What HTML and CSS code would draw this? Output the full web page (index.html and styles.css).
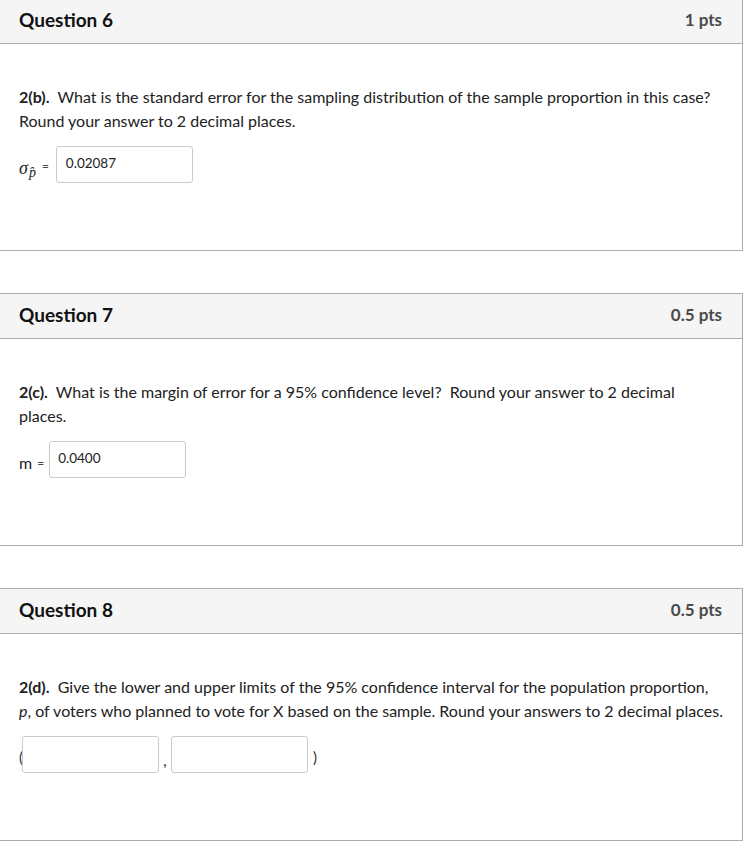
FILE: index.html
```html
<!DOCTYPE html>
<html>
<head>
<meta charset="utf-8">
<link rel="stylesheet" href="styles.css">
</head>
<body>
<div class="page">
  <div class="card first">
    <div class="card-header">
      <span class="q-title">Question 6</span>
      <span class="q-pts">1 pts</span>
    </div>
    <div class="card-body">
      <p class="q-text"><b>2(b).</b>&nbsp; What is the standard error for the sampling distribution of the sample proportion in this case? Round your answer to 2 decimal places.</p>
      <div class="answer-row">
        <span class="math"><i class="sigma">σ</i><sub class="phat"><i>p̂</i></sub></span>
        <span class="eq">=</span>
        <span class="inp">0.02087</span>
      </div>
    </div>
  </div>

  <div class="card">
    <div class="card-header">
      <span class="q-title">Question 7</span>
      <span class="q-pts">0.5 pts</span>
    </div>
    <div class="card-body">
      <p class="q-text"><b>2(c).</b>&nbsp; What is the margin of error for a 95% confidence level?&nbsp; Round your answer to 2 decimal places.</p>
      <div class="answer-row">
        <span class="mlabel">m</span>
        <span class="eq eq-m">=</span>
        <span class="inp inp-m">0.0400</span>
      </div>
    </div>
  </div>

  <div class="card">
    <div class="card-header">
      <span class="q-title">Question 8</span>
      <span class="q-pts">0.5 pts</span>
    </div>
    <div class="card-body">
      <p class="q-text"><b>2(d).</b>&nbsp; Give the lower and upper limits of the 95% confidence interval for the population proportion, <i>p</i>, of voters who planned to vote for X based on the sample. Round your answers to 2 decimal places.</p>
      <div class="answer-row interval">
        <span class="paren">(</span>
        <span class="inp inp-i"></span>
        <span class="comma">,</span>
        <span class="inp inp-i"></span>
        <span class="paren rp">)</span>
      </div>
    </div>
  </div>
</div>
</body>
</html>
```

FILE: styles.css
```css
html, body {
  margin: 0;
  padding: 0;
  background: #ffffff;
}

body {
  font-family: Lato, "Noto Sans", sans-serif;
  color: #222;
}

.page {
  margin-left: -1px;
  width: 744px;
}

.card {
  border: 1px solid #acacac;
  margin-top: 42px;
  box-sizing: border-box;
}

.card.first {
  margin-top: -2px;
}

.card-header {
  background: #f5f5f5;
  border-bottom: 1px solid #acacac;
  height: 45px;
  box-sizing: border-box;
  display: flex;
  align-items: center;
  justify-content: space-between;
  padding: 0 20px 4px 19px;
}

.q-title {
  font-size: 19px;
  font-weight: 700;
  color: #111;
}

.q-pts {
  font-size: 17px;
  font-weight: 700;
  color: #4a4a4a;
}

.card-body {
  height: 206px;
  box-sizing: border-box;
  padding: 41px 19px 0 19px;
}

.q-text {
  margin: 0;
  font-size: 16px;
  line-height: 24px;
  color: #222;
}

.q-text b {
  font-weight: 700;
}

.answer-row {
  display: flex;
  align-items: center;
  margin-top: 13px;
  height: 37px;
}

.math {
  font-family: "Liberation Serif", "DejaVu Serif", serif;
  font-size: 18px;
  display: inline-flex;
  align-items: baseline;
  margin-top: 8px;
}

.sigma {
  font-style: italic;
}

.phat {
  font-size: 14px;
  margin-left: 1px;
  position: relative;
  top: 3px;
  vertical-align: baseline;
}

.eq {
  font-size: 12px;
  color: #444;
  margin-left: 6px;
  margin-right: 7px;
  margin-top: 2px;
}

.mlabel {
  font-size: 16px;
  color: #222;
  margin-top: 6px;
}

.eq-m {
  font-size: 12px;
  margin-left: 5px;
  margin-right: 5px;
  margin-top: 6px;
}

.inp {
  display: inline-block;
  box-sizing: border-box;
  width: 137px;
  height: 37px;
  border: 1px solid #cbcbcb;
  border-radius: 3px;
  background: #fff;
  font-size: 13.5px;
  color: #222;
  padding: 8px 0 0 9px;
}

.inp-m {
  padding-left: 8px;
}

.paren {
  font-size: 15px;
  color: #333;
  width: 4px;
  margin-top: 4px;
}

.interval .paren:first-child {
  width: 3px;
}

.rp {
  margin-left: 5px;
}

.comma {
  font-size: 15px;
  width: 12px;
  text-align: center;
  margin-top: 10px;
}

.inp-i {
  width: 137px;
  height: 37px;
}
```
